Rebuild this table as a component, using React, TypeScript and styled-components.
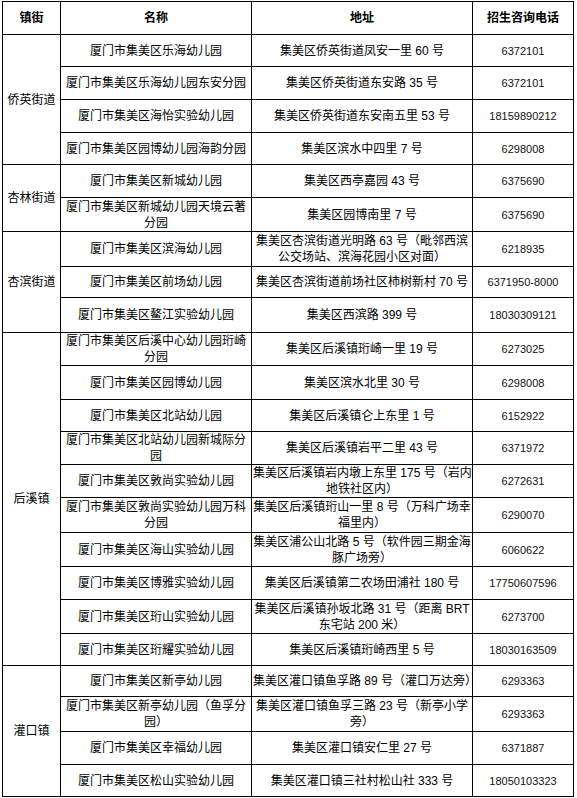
import React from "react";
import styled, { createGlobalStyle } from "styled-components";

const GlobalStyle = createGlobalStyle`
  html, body {
    margin: 0;
    padding: 0;
    background: #ffffff;
  }
  body {
    font-family: "Liberation Sans", "Noto Sans CJK SC", sans-serif;
    font-size: 12px;
    color: #000;
  }
`;

const Table = styled.table`
  margin: 1px 0 0 2px;
  border-collapse: collapse;
  table-layout: fixed;
  width: 571px;
  font-family: "Liberation Sans", "Noto Sans CJK SC", sans-serif;
  font-size: 12px;
  color: #000;
`;

const Col = styled.col<{ $w: number }>`
  width: ${(p) => p.$w}px;
`;

const Row = styled.tr<{ $h: number }>`
  height: ${(p) => p.$h}px;
`;

const HeadCell = styled.th`
  border: 1px solid #000;
  padding: 0;
  font-weight: bold;
  text-align: center;
  vertical-align: middle;
  line-height: 16px;
  white-space: nowrap;
`;

const Cell = styled.td`
  border: 1px solid #000;
  padding: 0 1px;
  text-align: center;
  vertical-align: middle;
  line-height: 16px;
  white-space: nowrap;
  overflow: visible;
`;

const DistrictCell = styled(Cell)`
  padding: 0;
`;

const TelCell = styled(Cell)`
  font-size: 11px;
  color: #111;
`;

type Item = {
  name: string[];
  addr: string[];
  tel: string;
  h: number;
};

type Group = {
  district: string;
  items: Item[];
};

const groups: Group[] = [
  {
    district: "侨英街道",
    items: [
      { name: ["厦门市集美区乐海幼儿园"], addr: ["集美区侨英街道凤安一里 60 号"], tel: "6372101", h: 32 },
      { name: ["厦门市集美区乐海幼儿园东安分园"], addr: ["集美区侨英街道东安路 35 号"], tel: "6372101", h: 33 },
      { name: ["厦门市集美区海怡实验幼儿园"], addr: ["集美区侨英街道东安南五里 53 号"], tel: "18159890212", h: 33 },
      { name: ["厦门市集美区园博幼儿园海韵分园"], addr: ["集美区滨水中四里 7 号"], tel: "6298008", h: 32 },
    ],
  },
  {
    district: "杏林街道",
    items: [
      { name: ["厦门市集美区新城幼儿园"], addr: ["集美区西亭嘉园 43 号"], tel: "6375690", h: 33 },
      { name: ["厦门市集美区新城幼儿园天境云著", "分园"], addr: ["集美区园博南里 7 号"], tel: "6375690", h: 34 },
    ],
  },
  {
    district: "杏滨街道",
    items: [
      {
        name: ["厦门市集美区滨海幼儿园"],
        addr: ["集美区杏滨街道光明路 63 号（毗邻西滨", "公交场站、滨海花园小区对面）"],
        tel: "6218935",
        h: 35,
      },
      { name: ["厦门市集美区前场幼儿园"], addr: ["集美区杏滨街道前场社区柿树新村 70 号"], tel: "6371950-8000", h: 31 },
      { name: ["厦门市集美区鳌江实验幼儿园"], addr: ["集美区西滨路 399 号"], tel: "18030309121", h: 35 },
    ],
  },
  {
    district: "后溪镇",
    items: [
      { name: ["厦门市集美区后溪中心幼儿园珩崎", "分园"], addr: ["集美区后溪镇珩崎一里 19 号"], tel: "6273025", h: 31 },
      { name: ["厦门市集美区园博幼儿园"], addr: ["集美区滨水北里 30 号"], tel: "6298008", h: 34 },
      { name: ["厦门市集美区北站幼儿园"], addr: ["集美区后溪镇仑上东里 1 号"], tel: "6152922", h: 32 },
      { name: ["厦门市集美区北站幼儿园新城际分", "园"], addr: ["集美区后溪镇岩平二里 43 号"], tel: "6371972", h: 33 },
      {
        name: ["厦门市集美区敦尚实验幼儿园"],
        addr: ["集美区后溪镇岩内墩上东里 175 号（岩内", "地铁社区内）"],
        tel: "6272631",
        h: 33,
      },
      {
        name: ["厦门市集美区敦尚实验幼儿园万科", "分园"],
        addr: ["集美区后溪镇珩山一里 8 号（万科广场幸", "福里内）"],
        tel: "6290070",
        h: 35,
      },
      {
        name: ["厦门市集美区海山实验幼儿园"],
        addr: ["集美区浦公山北路 5 号（软件园三期金海", "豚广场旁）"],
        tel: "6060622",
        h: 34,
      },
      { name: ["厦门市集美区博雅实验幼儿园"], addr: ["集美区后溪镇第二农场田浦社 180 号"], tel: "17750607596", h: 33 },
      {
        name: ["厦门市集美区珩山实验幼儿园"],
        addr: ["集美区后溪镇孙坂北路 31 号（距离 BRT", "东宅站 200 米）"],
        tel: "6273700",
        h: 34,
      },
      { name: ["厦门市集美区珩耀实验幼儿园"], addr: ["集美区后溪镇珩崎西里 5 号"], tel: "18030163509", h: 32 },
    ],
  },
  {
    district: "灌口镇",
    items: [
      { name: ["厦门市集美区新亭幼儿园"], addr: ["集美区灌口镇鱼孚路 89 号（灌口万达旁）"], tel: "6293363", h: 31 },
      {
        name: ["厦门市集美区新亭幼儿园（鱼孚分", "园）"],
        addr: ["集美区灌口镇鱼孚三路 23 号（新亭小学", "旁）"],
        tel: "6293363",
        h: 35,
      },
      { name: ["厦门市集美区幸福幼儿园"], addr: ["集美区灌口镇安仁里 27 号"], tel: "6371887", h: 33 },
      { name: ["厦门市集美区松山实验幼儿园"], addr: ["集美区灌口镇三社村松山社 333 号"], tel: "18050103323", h: 32 },
    ],
  },
];

const Lines: React.FC<{ lines: string[] }> = ({ lines }) => (
  <>
    {lines.map((l, i) => (
      <React.Fragment key={i}>
        {i > 0 && <br />}
        {l}
      </React.Fragment>
    ))}
  </>
);

export default function App() {
  return (
    <>
      <GlobalStyle />
      <Table>
        <colgroup>
          <Col $w={58} />
          <Col $w={191} />
          <Col $w={221} />
          <Col $w={101} />
        </colgroup>
        <thead>
          <Row $h={33}>
            <HeadCell>镇街</HeadCell>
            <HeadCell>名称</HeadCell>
            <HeadCell>地址</HeadCell>
            <HeadCell>招生咨询电话</HeadCell>
          </Row>
        </thead>
        <tbody>
          {groups.map((g) =>
            g.items.map((it, idx) => (
              <Row $h={it.h} key={g.district + idx}>
                {idx === 0 && <DistrictCell rowSpan={g.items.length}>{g.district}</DistrictCell>}
                <Cell>
                  <Lines lines={it.name} />
                </Cell>
                <Cell>
                  <Lines lines={it.addr} />
                </Cell>
                <TelCell>{it.tel}</TelCell>
              </Row>
            ))
          )}
        </tbody>
      </Table>
    </>
  );
}
